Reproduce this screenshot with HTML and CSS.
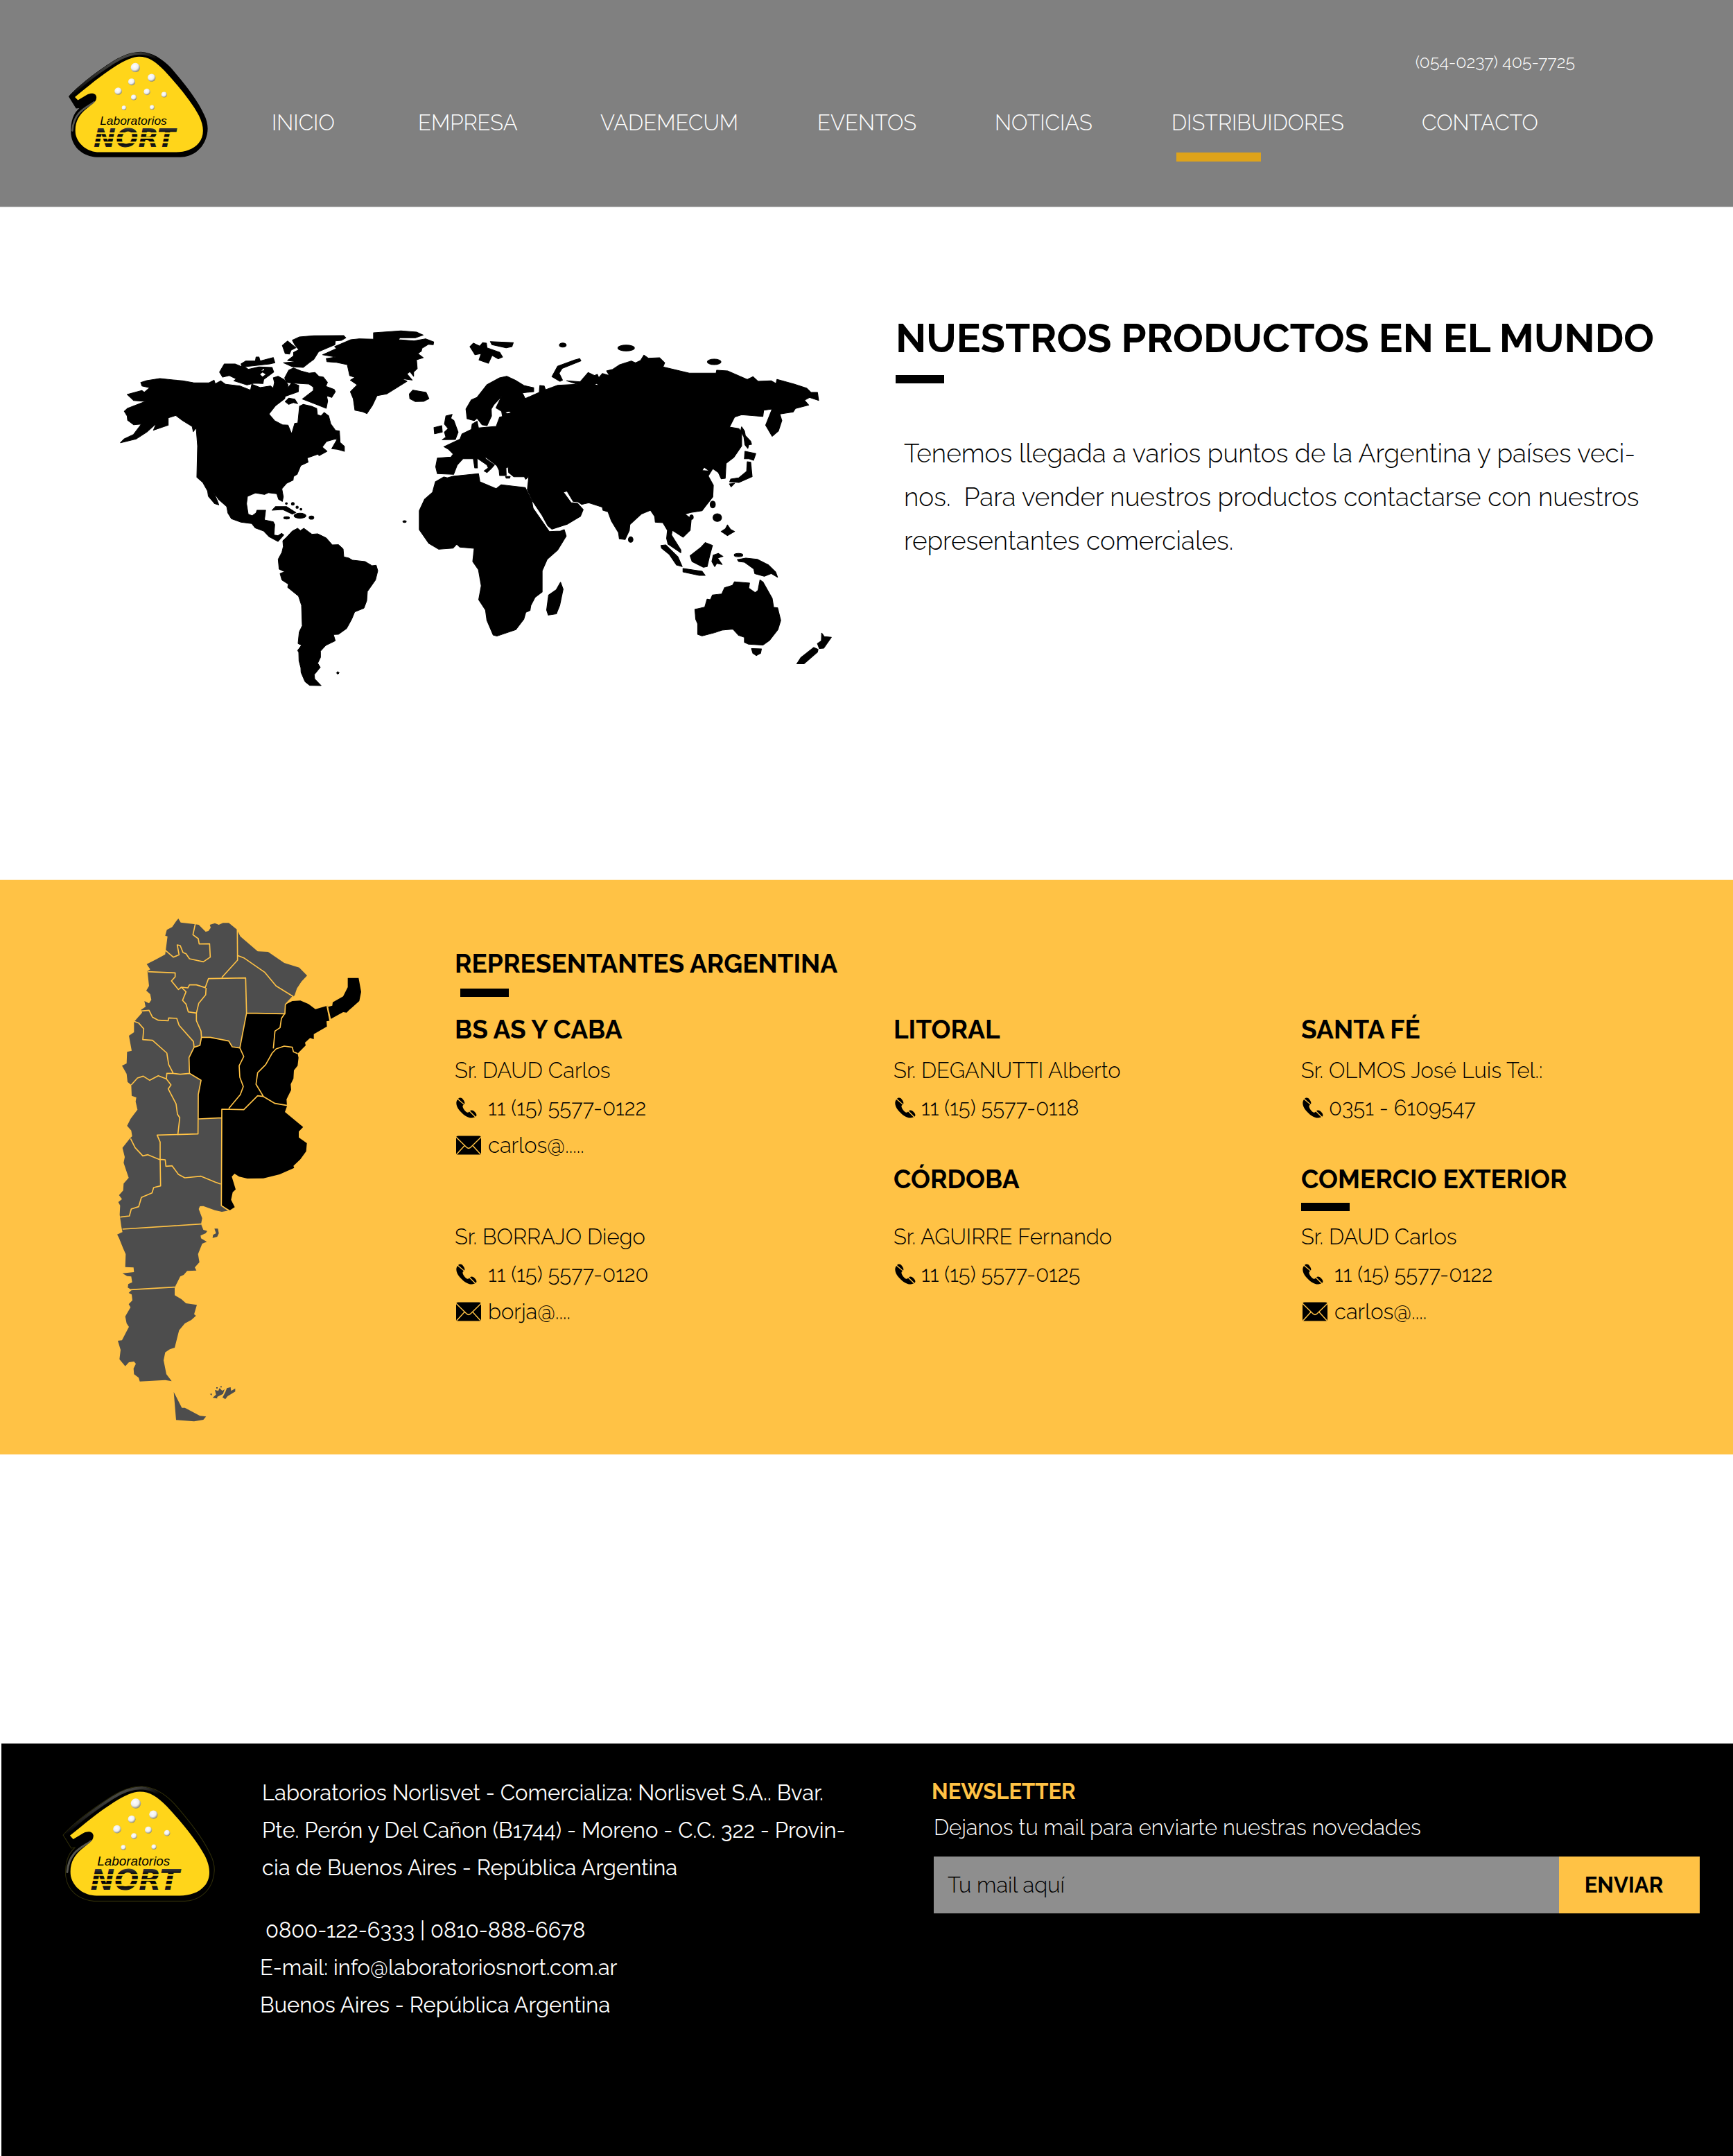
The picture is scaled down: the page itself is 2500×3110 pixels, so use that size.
FILE: index.html
```html
<!DOCTYPE html>
<html lang="es">
<head>
<meta charset="utf-8">
<title>Laboratorios Nort - Distribuidores</title>
<meta name="viewport" content="width=device-width, initial-scale=1">
<link rel="stylesheet" href="styles.css">
</head>
<body>
<svg class="sprite" aria-hidden="true">
  <defs>
    <linearGradient id="bevel" x1="0" y1="0" x2="1" y2="1">
      <stop offset="0" stop-color="#77776c"/><stop offset=".3" stop-color="#4a4a46"/><stop offset=".5" stop-color="#000"/>
    </linearGradient>
    <linearGradient id="chrome" x1="0" y1="0" x2="0" y2="1">
      <stop offset="0" stop-color="#777"/><stop offset=".3" stop-color="#111"/><stop offset=".65" stop-color="#000"/><stop offset="1" stop-color="#555"/>
    </linearGradient>
    <radialGradient id="ball" cx=".4" cy=".35" r=".65">
      <stop offset="0" stop-color="#fff"/><stop offset=".6" stop-color="#eee"/><stop offset="1" stop-color="#8d8a70"/>
    </radialGradient>
  </defs>
  <symbol id="drop" viewBox="55 40 610 465">
    <path stroke="inherit" d="M58 238C100 190 180 130 250 85C300 54 340 45 370 45C420 48 462 75 500 115C560 185 612 250 642 315C662 355 662 390 648 425C630 470 590 498 540 500H180C120 495 75 460 68 400C66 350 75 315 104 288L90 290Z"/>
    <path fill="none" stroke="url(#bevel)" stroke-width="11" stroke-linecap="round" stroke-linejoin="round" d="M66 238C104 196 184 136 253 91C302 60 340 52 370 52C416 55 455 80 494 121"/>
    <path fill="none" stroke="#55554f" stroke-width="8" stroke-linecap="round" d="M168 262C140 284 80 300 74 385"/>
    <path fill="#ffd51a" stroke="none" d="M85 240C140 195 200 145 260 107C300 82 335 66 362 66C402 66 432 86 470 125C530 190 587 260 620 320C645 370 642 410 620 438C595 468 560 478 520 478H190C140 478 98 445 88 400C82 350 102 320 130 295L155 275C168 266 178 256 178 240C175 222 155 222 138 230L98 254Z"/>
    <g fill="url(#ball)" stroke="none">
      <circle cx="346" cy="113" r="20"/><circle cx="416" cy="157" r="17"/><circle cx="330" cy="175" r="15"/><circle cx="272" cy="215" r="16"/><circle cx="396" cy="218" r="14"/><circle cx="339" cy="242" r="12"/><circle cx="470" cy="230" r="12"/><circle cx="297" cy="287" r="10"/><circle cx="418" cy="285" r="10"/>
    </g>
  </symbol>
  <symbol id="phone" viewBox="0 0 30 30">
    <path d="M2 3C-1 7 0 13 5 19C10 25 17 30 23 29.600L27 28.500L19 20.500C17.500 22.500 15.500 22 13.500 20C11 17.500 10 15.500 9.500 13.500C9.300 12 10 11 11 10.500Z"/>
    <path d="M3 2C5 0 8 0 10 3C12 5.500 13 8 12 9.800Z"/>
    <path d="M20 19.500C22 17.500 25 18.500 27 21C29.500 23.500 30.300 26 28.300 27.800Z"/>
  </symbol>
  <symbol id="mail" viewBox="0 0 37 28">
    <rect width="37" height="28" rx="3"/>
    <path fill="none" stroke="#ffc245" stroke-width="1.500" d="M0 2L16 17.500Q18.500 19.500 21 17.500L37 2M1 27L12.500 14.500M36 27L24.500 14.500"/>
  </symbol>
</svg>

<header class="header">
  <a class="header-logo" href="#" aria-label="Laboratorios Nort">
    <svg class="logo" viewBox="55 40 610 465">
      <use href="#drop" x="55" y="40" width="610" height="465"/>
      <text class="logo-small" x="193" y="360">Laboratorios</text>
      <text class="logo-big" x="166" y="456" fill="url(#chrome)">NORT</text>
      <path stroke="#ffd51a" stroke-width="7" d="M160 396H550M160 416H545M160 436H540"/>
    </svg>
  </a>
  <div class="header-main">
    <a class="header-phone" href="tel:+5402374057725">(054-0237) 405-7725</a>
    <nav class="nav">
      <a href="#">INICIO</a>
      <a href="#">EMPRESA</a>
      <a href="#">VADEMECUM</a>
      <a href="#">EVENTOS</a>
      <a href="#">NOTICIAS</a>
      <a class="active" href="#" aria-current="page">DISTRIBUIDORES</a>
      <a href="#">CONTACTO</a>
    </nav>
  </div>
</header>

<main>
  <section class="intro">
    <div class="intro-map">
      <svg class="world" viewBox="172 474 1032 520" role="img" aria-label="Mapa del mundo">
        <g transform="translate(160 460) scale(.3444 .3333)">
          <path d="M125 275L150 267L205 258L260 264L300 268L345 276L410 277L432 265L437 281L460 268L480 283L540 290L585 308L590 283L625 297L668 290L680 300L685 275L680 255L700 248L725 262L742 285L740 300L757 277L787 288L785 315L730 335L728 345L690 375L662 412L685 440L718 458L742 460L757 498L770 452L783 450L790 378L805 370L840 378L862 388L865 415L880 420L893 405L912 420L921 455L940 482L957 485L960 535L978 552V573L950 565L925 562L950 517L903 530L885 555L905 573L872 592L868 585L822 602L826 620L795 635L780 672L765 682L763 698L735 712L716 735L722 770L718 790L702 780L695 757L660 752L643 760L605 753L572 768L568 800L575 845L592 852L608 840L612 828H648L643 870L680 878L686 890L683 935L700 938L715 928L724 935L700 963L662 942L640 918L605 905L590 886L545 880L505 865L490 840L485 812L452 782L430 750L445 785L452 805L435 800L408 767L405 745L385 708L360 685L363 550L357 470L345 488L340 465L300 440L272 418L240 428V460L178 482L190 453L150 490L105 520L40 536L55 520L95 500L128 455L95 458L70 438L68 420L56 400L70 387L145 357L95 353L68 327L130 310L140 318L162 298L130 290Z"/>
          <path d="M730 358L745 343L770 347L782 367L765 362L745 370ZM735 275L728 255L745 222L765 212L795 225L830 235L855 232L870 248L890 252L907 275L900 292L935 305L940 315L925 340L903 332L908 355L902 387L860 370L802 347L848 310V295L830 282L770 278Z"/>
          <path d="M455 230L475 195H520L550 208L545 195L565 182H605L608 165H620L625 182L680 167L687 190L665 195L560 207L575 218L620 208L675 210L682 230L640 262L637 280L600 278L570 286L515 268L525 260L495 245L468 252Z"/>
          <path d="M760 92L790 78L850 73L975 72L984 82L965 93L940 95L938 112L870 142L850 175L830 190L805 210L760 207L723 190L780 185L740 180L765 160V145L787 133L770 112ZM718 115L740 96L775 125L755 135L748 152L730 150Z"/>
          <path d="M887 155L905 147L945 128L937 120L1005 90L1040 86L1100 88V60L1215 52L1280 57L1308 70L1275 82L1210 82L1205 90L1270 95L1318 86L1352 100L1350 112L1330 110L1303 127L1300 140L1285 150L1308 168L1280 177L1283 215L1268 230V248L1252 228L1240 238L1262 265L1215 258L1240 270L1155 325L1115 332L1095 375L1072 410L1055 402L1022 395L1015 345L1003 315L1032 285L1003 265L1022 253L1000 245L990 198L945 188L905 185L902 172L942 165Z"/>
          <path d="M1250 325L1265 308L1320 318L1332 345L1310 357L1275 358L1252 345ZM675 828L690 812H735L775 838L760 845L720 825Z"/>
          <ellipse cx="792" cy="852" rx="25" ry="11"/><ellipse cx="736" cy="861" rx="12" ry="5"/><ellipse cx="840" cy="860" rx="10" ry="7"/><circle cx="762" cy="800" r="6"/><circle cx="780" cy="815" r="5"/><circle cx="735" cy="799" r="4"/><circle cx="796" cy="824" r="4"/><ellipse cx="1230" cy="877" rx="7" ry="4"/>
          <path class="cut" d="M625 240L635 232L648 240L635 250ZM630 224L640 216L642 222Z"/>
        </g>
        <path transform="translate(380 740) scale(.3333)" d="M84 120L100 105L125 78L148 66L160 76L175 66L210 92L235 90L272 108L298 138L325 137L345 155L348 190L370 195L385 204L440 210L470 228L488 226L495 250L485 290L450 340L447 380L435 412L395 428L382 460L360 500L325 525L303 526L311 553L270 573L247 598V625L235 650L246 668L220 700L222 718L250 747L200 746L180 730L163 690L162 670L154 640L153 603L148 595L165 572L150 565L155 515L168 488L165 400L152 360L105 322L108 308L80 290L72 262L92 254L68 243L64 200L80 170L86 145ZM316 692L322 686L328 692L322 698Z"/>
        <g transform="translate(580 460) scale(.4082 .3333)">
          <path d="M125 602L173 598L181 585L165 565L148 553L205 520L212 498L245 478L248 455L265 443L270 472L333 465L345 425L355 422L352 400L332 385L352 335L325 370L315 390L316 420L300 462L283 458L265 430L255 440L230 432L226 390L245 350L265 340L300 285L345 255L370 248L400 265L430 288L465 298V315L425 320L435 345L485 318L487 288L502 290L507 307L550 287L620 283L582 268L630 272L658 232L680 245L690 240L695 255L708 236L733 245L723 225L745 218L770 198L810 182L825 190L843 180L855 157L870 170L910 168L928 190L922 208L1015 235H1110L1112 222L1150 225L1220 262L1240 250L1258 270L1305 268L1322 280L1325 262L1385 282L1430 300L1445 318H1468L1472 353L1440 340L1422 352L1437 373L1390 388L1382 403L1335 412L1342 440L1330 485L1308 508L1285 460L1308 390L1278 395L1275 422L1200 415L1175 425L1157 468L1190 475L1200 490V550L1172 600L1145 625L1142 690L1128 692L1118 665L1098 648L1082 680L1100 720L1098 770L1060 830L1020 838L1000 845L1022 865L1018 915L993 945L955 915L952 935L985 1000V1012L940 975L935 950L938 915L922 882L895 880L893 855L878 828L845 845L805 890L803 915L788 955L768 952L765 925L740 875L728 835L710 828L708 815L660 796L635 803L622 792L605 790L583 745L570 750L597 795L620 798L640 825L630 855L585 888L530 910L515 895L495 850L462 790L443 740L448 683L395 683L377 665L375 640L367 645L368 678L345 678L343 655L335 635L292 595L295 605L326 632L315 648L300 665L290 658L305 645L300 632L268 605H215L195 632L182 673L125 670L119 640Z"/>
          <path d="M252 605H265L266 645H257ZM366 682H382L380 689H368ZM432 682L446 684L437 694Z"/>
          <path d="M160 688L180 681L270 670L275 705L333 735L350 718L435 730L458 785L463 820L520 920L560 918L573 912L580 940L550 1000L513 1040L495 1090V1182L470 1205L455 1240L452 1262L437 1270L430 1300L402 1345L335 1373L322 1368L300 1305L295 1260L271 1215L280 1155L270 1085L250 1050L255 993L205 988L193 975L180 992L130 997L95 972L61 912V830L80 780L108 750L118 705L148 684ZM560 1140L569 1170L557 1240L545 1277L517 1282L511 1260L518 1195L545 1172Z"/>
          <path d="M155 420L177 413L172 430L183 440L198 490L188 522L142 523L155 512L150 490L163 475L150 455ZM113 470L140 462L142 490L115 497ZM240 120L252 105L275 118L285 103L298 105L300 125L345 145L355 165L340 173L318 158L305 192L272 178L280 150L258 155ZM312 98L393 103L388 120L368 125L318 112ZM530 250L550 205L610 178L628 172L632 182L565 215L555 235L567 265L558 270Z"/>
          <path d="M1200 467L1210 485L1213 505L1232 530L1235 543L1225 545L1222 560L1212 545L1208 510L1197 485ZM1212 573L1250 583L1242 612L1225 605H1210ZM1220 618L1232 620L1237 683L1190 708L1158 705L1162 693L1190 688L1218 660ZM1157 714L1175 712L1163 727ZM1150 892L1160 910L1175 920L1150 938L1128 920L1143 908Z"/>
          <ellipse cx="568" cy="113" rx="12" ry="9"/><ellipse cx="792" cy="126" rx="29" ry="13"/><ellipse cx="1103" cy="186" rx="24" ry="12"/><ellipse cx="1098" cy="803" rx="9" ry="15"/><ellipse cx="1114" cy="860" rx="15" ry="17"/><ellipse cx="1023" cy="858" rx="6" ry="10"/><ellipse cx="808" cy="955" rx="8" ry="12"/><ellipse cx="1189" cy="1022" rx="15" ry="7"/>
          <path d="M915 980L932 978L975 1030L990 1072L970 1065L945 1020L917 992ZM993 1080L1060 1092L1071 1110H1050L993 1095ZM1018 1025L1055 990L1072 968L1097 980L1087 1025L1078 1072L1065 1075L1025 1050ZM1095 1050L1100 1022L1118 1015L1134 1028L1115 1035L1131 1063L1112 1058L1105 1072ZM1185 1042L1215 1035L1255 1040L1295 1065L1320 1095L1327 1118L1305 1102L1280 1114L1247 1103L1243 1082L1210 1053L1190 1050Z"/>
          <path d="M1035 1257L1070 1247L1078 1213L1090 1215L1097 1195L1130 1190L1140 1163L1168 1153L1175 1138L1228 1143L1225 1165L1248 1185L1258 1175L1265 1130L1275 1138L1308 1210L1313 1248L1327 1250L1338 1305L1328 1345L1298 1392L1275 1412L1225 1408L1210 1400V1378L1190 1370L1170 1343L1130 1347L1105 1358L1060 1372L1045 1365V1320L1038 1300ZM1235 1427L1270 1428L1267 1447L1252 1457L1240 1447ZM1483 1360L1492 1375L1517 1378L1490 1425L1475 1427L1468 1405L1482 1393ZM1455 1422L1470 1430L1468 1442L1420 1493H1395L1410 1465Z"/>
          <path class="cut" d="M366 405L378 401L384 405L372 409ZM1062 655L1068 644L1082 656ZM682 284L688 281L692 286Z"/>
        </g>
      </svg>
    </div>
    <div class="intro-text">
      <h1>NUESTROS PRODUCTOS EN EL MUNDO</h1>
      <p>Tenemos llegada a varios puntos de la Argentina y países veci-<br>nos.&nbsp; Para vender nuestros productos contactarse con nuestros<br>representantes comerciales.</p>
    </div>
  </section>

  <section class="reps">
    <div class="reps-map">
      <svg class="argentina" viewBox="54 45 1062 2182" role="img" aria-label="Mapa de Argentina">
        <g fill="#4d4d4d">
          <path d="M312 60L322 48L332 65L390 72L410 75L440 105L452 102L462 88L458 75L480 68L497 75L515 67H540L575 95L590 125L665 190L710 192L780 240L845 260L879 295L855 320L835 350L825 380L785 420V460L600 620L510 1290L540 1312L510 1317L480 1310L430 1292L415 1293L410 1305L425 1345L420 1370L430 1395L447 1400L440 1410L418 1420L420 1432L445 1447L425 1455L407 1500L413 1535L393 1558L400 1571L360 1573L345 1590L330 1597L306 1645V1678L335 1695L355 1713L402 1720L390 1760L398 1767L378 1785L350 1800L325 1830L306 1905L285 1912L265 1925L258 1960L270 2020L293 2050L265 2045L155 2051L150 2035L130 2020L128 1995L138 1975L130 1965L108 1968L92 1985L67 1955L72 1915L60 1875L78 1873L95 1840L108 1815L98 1800L92 1770L115 1730L107 1717L123 1700L120 1675L107 1668L120 1655L103 1645L105 1630L122 1622L118 1597L100 1595L80 1583L130 1578L128 1558L92 1556L94 1500L83 1475L65 1430L57 1415L80 1405L75 1380L68 1330L70 1290L62 1275L78 1262L65 1245L83 1225L85 1195L107 1170L95 1135L85 1105L90 1080L80 1040L112 1000L122 990L118 965L100 945L115 915L130 895L145 875L137 840L140 822L120 815L118 768L102 755L98 720L78 685L98 675L100 625L120 620L108 555L130 540V495L165 455L160 443L180 430L175 405L195 415L205 400L200 375L183 360L195 340L188 275L200 268L185 245L225 225L265 203L275 125L265 122L272 97L295 85Z"/>
          <path d="M478 1390H493L497 1410L490 1425L470 1430L472 1417L485 1410ZM302 2097L337 2165H350L415 2200L442 2203L430 2217L390 2224L312 2218Z"/>
          <path d="M480 2088L495 2092L500 2080L512 2092L522 2085L515 2105L490 2118V2125L470 2122L485 2108ZM532 2080L548 2076L550 2092L568 2082L568 2095L535 2115L525 2128L513 2120L525 2098ZM458 2105L468 2104L466 2112ZM486 2076H492V2082H486ZM503 2072H510V2077H503Z"/>
        </g>
        <path d="M1055 305H1102L1113 365L1105 405L1060 445L1050 455L1035 453L982 482L970 430L988 425L990 410L1035 385L1055 345ZM785 420L815 405L850 403L885 418L915 440L967 425L978 490L963 493L965 515L908 548V570L892 565L870 585L873 597L838 632L842 650L838 685L822 705L820 740L808 765L810 790L790 830L792 860L783 885L862 950L843 970V995L878 1020L875 1055L850 1090L820 1118L823 1127L760 1155L690 1172L620 1173L585 1165L565 1152L553 1165L570 1220L557 1232L550 1265L566 1297L545 1310L510 1290V910L410 915V810L420 748L368 715V650L390 605L418 595L422 562H460L540 578L550 600L588 608L617 457L785 460Z"/>
        <path class="borders" d="M395 72L385 118L408 135L412 158L457 157L460 215L430 235L370 222L355 200L342 195L330 165L317 162L325 205L300 215L265 185M577 95L578 228L510 303M190 278L308 283V300L292 318L322 355L335 345L363 348L370 335H400L438 347L452 308L613 305L617 457L785 460M578 208L605 218L695 280L745 340L818 385L785 420L783 458L768 480L762 520L740 535L733 610M335 345L355 365L340 402L355 418L365 452L400 457L410 415L440 378L442 348M400 457V490L420 535L422 562L460 562L540 578L555 603L588 608L617 457M422 562L415 597L390 605L387 580L325 510L315 480L280 478L278 490L235 488L210 475L195 445L160 448M130 493L150 500L172 525L168 572L210 575L272 630L280 680L300 718L330 722L370 718L368 650L390 605M118 768L145 738L170 730L198 748L235 728L270 742L272 718H300M270 742L290 768L278 785L312 850L318 895L328 910L320 980M370 718L420 748L408 810L407 980L230 985L243 1015V1090L265 1092L268 1120L295 1118L322 1155L350 1170L420 1163L480 1188L505 1197M410 915L510 910M115 1000L135 1040L168 1075L190 1070L243 1092L245 1205L215 1212L208 1235L162 1255L150 1295L118 1305L110 1335L70 1340M80 1392L420 1370M115 1654L306 1643M540 1312L508 1290L510 873L605 875L665 815L690 818M588 608L605 645L585 685L588 735L603 775L590 810L540 870M838 632L820 625L815 605L780 600L745 612L728 630L700 680L665 715L658 765L690 818L740 848L793 857M965 425L978 490"/>
      </svg>
    </div>
    <div class="reps-content">
      <h2 class="ruled">REPRESENTANTES ARGENTINA</h2>
      <div class="reps-grid">
        <div class="reps-col">
          <article class="rep">
            <h3>BS AS Y CABA</h3>
            <p>Sr. DAUD Carlos</p>
            <p class="contact"><svg class="phone"><use href="#phone"/></svg>11 (15) 5577-0122</p>
            <p class="contact"><svg class="mail"><use href="#mail"/></svg>carlos@.....</p>
          </article>
          <article class="rep rep-spaced">
            <p>Sr. BORRAJO Diego</p>
            <p class="contact"><svg class="phone"><use href="#phone"/></svg>11 (15) 5577-0120</p>
            <p class="contact"><svg class="mail"><use href="#mail"/></svg>borja@....</p>
          </article>
        </div>
        <div class="reps-col tight">
          <article class="rep">
            <h3>LITORAL</h3>
            <p>Sr. DEGANUTTI Alberto</p>
            <p class="contact"><svg class="phone"><use href="#phone"/></svg>11 (15) 5577-0118</p>
          </article>
          <article class="rep rep-lower">
            <h3>CÓRDOBA</h3>
            <p>Sr. AGUIRRE Fernando</p>
            <p class="contact"><svg class="phone"><use href="#phone"/></svg>11 (15) 5577-0125</p>
          </article>
        </div>
        <div class="reps-col">
          <article class="rep tight">
            <h3>SANTA FÉ</h3>
            <p>Sr. OLMOS José Luis Tel.:</p>
            <p class="contact"><svg class="phone"><use href="#phone"/></svg>0351 - 6109547</p>
          </article>
          <article class="rep rep-lower">
            <h3 class="ruled">COMERCIO EXTERIOR</h3>
            <p>Sr. DAUD Carlos</p>
            <p class="contact"><svg class="phone"><use href="#phone"/></svg>11 (15) 5577-0122</p>
            <p class="contact"><svg class="mail"><use href="#mail"/></svg>carlos@....</p>
          </article>
        </div>
      </div>
    </div>
  </section>
</main>

<footer class="footer">
  <a class="footer-logo" href="#" aria-label="Laboratorios Nort">
    <svg class="logo" viewBox="55 40 610 465">
      <use href="#drop" x="55" y="40" width="610" height="465"/>
      <text class="logo-small" x="193" y="360">Laboratorios</text>
      <text class="logo-big" x="166" y="456" fill="url(#chrome)">NORT</text>
      <path stroke="#ffd51a" stroke-width="7" d="M160 396H550M160 416H545M160 436H540"/>
    </svg>
  </a>
  <address class="footer-info">
    <p>Laboratorios Norlisvet - Comercializa: Norlisvet S.A.. Bvar.<br>Pte. Perón y Del Cañon (B1744) - Moreno - C.C. 322 - Provin-<br>cia de Buenos Aires - República Argentina</p>
    <p>&nbsp;0800-122-6333 | 0810-888-6678<br>E-mail: <a href="mailto:info@laboratoriosnort.com.ar">info@laboratoriosnort.com.ar</a><br>Buenos Aires - República Argentina</p>
  </address>
  <form class="newsletter">
    <h2>NEWSLETTER</h2>
    <label for="email">Dejanos tu mail para enviarte nuestras novedades</label>
    <div class="newsletter-row">
      <input id="email" type="email" placeholder="Tu mail aquí">
      <button type="submit">ENVIAR</button>
    </div>
  </form>
</footer>
</body>
</html>
```
FILE: styles.css
```css
* {
  box-sizing: border-box;
}

body,
h1,
h2,
h3,
p {
  margin: 0;
}

body {
  background: #fff;
  color: #000;
  font-family: Raleway, Lato, "Open Sans", sans-serif;
  font-size: 31px;
  font-weight: 300;
  font-variant-numeric: oldstyle-nums;
}

a {
  color: inherit;
  text-decoration: none;
}

.sprite {
  position: absolute;
  width: 0;
  height: 0;
}

.logo {
  display: block;
  width: 100%;
  aspect-ratio: 610 / 465;
  overflow: visible;
}

.logo-small {
  font: italic 52px "Liberation Sans", sans-serif;
}

.logo-big {
  font: italic bold 114px "DejaVu Sans", sans-serif;
}

/* Header */

.header {
  display: grid;
  grid-template-columns: 392fr 2108fr;
  padding: 73px 0 65px;
  background: #808080;
  border-bottom: 1px solid #c4c4c4;
  color: #fff;
}

.header-logo {
  width: 204px;
  margin-left: 98px;
}

.header-main {
  display: flex;
  flex-direction: column;
}

.header-phone {
  align-self: flex-end;
  margin-right: 228px;
  font-size: 25px;
  line-height: 32px;
}

.nav {
  display: grid;
  grid-template-columns: 211fr 263fr 313fr 256fr 255fr 361fr 449fr;
  margin-top: 52px;
  line-height: 40px;
}

.nav .active::after {
  content: "";
  display: block;
  width: 122px;
  height: 13px;
  margin: 23px 0 0 7px;
  background: #dea31a;
}

/* Intro */

.intro {
  display: grid;
  grid-template-columns: 1292fr 1208fr;
  padding: 153px 0 275px;
}

.intro-map {
  padding: 22px 88px 0 172px;
}

.world {
  display: block;
  width: 100%;
  stroke: #000;
  stroke-width: 3px;
  stroke-linejoin: round;
}

.world .cut {
  fill: #fff;
  stroke: none;
}

h1 {
  font-size: 58px;
  line-height: 72px;
  white-space: nowrap;
}

h1::after,
.ruled::after {
  content: "";
  display: block;
  width: 70px;
  height: 12px;
  background: #000;
}

h1::after {
  margin-top: 17px;
}

.intro-text p {
  margin: 70px 0 0 12px;
  font-size: 37px;
  line-height: 63px;
  white-space: nowrap;
}

/* Representatives */

.reps {
  display: grid;
  grid-template-columns: 656fr 1844fr;
  padding: 55px 0 47px;
  background: #ffc245;
  white-space: nowrap;
}

.reps-map {
  padding: 0 134px 0 168px;
}

.argentina {
  display: block;
  width: 100%;
}

.borders {
  fill: none;
  stroke: #ffc245;
  stroke-width: 5px;
  stroke-linejoin: round;
}

.reps-content {
  padding-top: 42px;
}

.reps h2,
.reps h3 {
  font-size: 37px;
  line-height: 48px;
}

.reps h2::after {
  margin: 12px 0 0 8px;
}

.reps-grid {
  display: grid;
  grid-template-columns: 633fr 588fr 623fr;
  margin-top: 23px;
}

.rep h3 {
  margin-bottom: 8px;
}

.rep p {
  line-height: 54px;
}

.rep-spaced {
  margin-top: 78px;
}

.rep-lower {
  margin-top: 52px;
}

.rep-lower h3 {
  min-height: 72px;
}

.rep-lower .ruled::after {
  margin-top: 10px;
}

.contact {
  display: flex;
  align-items: center;
  gap: 10px;
}

.contact svg {
  box-sizing: content-box;
  margin-left: 2px;
}

.phone {
  width: 30px;
  height: 30px;
  padding-right: 6px;
}

.mail {
  width: 36px;
  height: 28px;
}

.tight .contact {
  gap: 2px;
}

/* Footer */

.footer {
  display: grid;
  grid-template-columns: 373fr 969fr 1108fr;
  margin: 417px 0 0 2px;
  padding: 44px 48px 192px 0;
  background: #000;
  color: #fff;
}

.footer-logo {
  width: 222px;
  margin: 16px 0 0 88px;
  stroke: #2e2c08;
  stroke-width: 3px;
}

.footer-logo text {
  stroke: none;
}

.footer-info {
  font-style: normal;
  font-weight: 400;
  line-height: 54px;
  white-space: nowrap;
}

.footer-info p:first-child {
  margin-left: 3px;
}

.footer-info p + p {
  margin-top: 36px;
}

.newsletter h2 {
  margin-top: 5px;
  color: #ffc245;
  font-size: 31px;
  line-height: 40px;
}

.newsletter label {
  display: block;
  margin: 12px 0 22px 3px;
  line-height: 40px;
}

.newsletter-row {
  display: flex;
  margin-left: 3px;
}

.newsletter input {
  flex: 1;
  min-width: 0;
  height: 82px;
  padding: 0 20px;
  border: 0;
  border-radius: 0;
  background: #8e8e8e;
  color: #000;
  font: inherit;
}

.newsletter input::placeholder {
  color: #000;
  opacity: 1;
}

.newsletter button {
  width: 203px;
  padding: 0 16px 0 0;
  border: 0;
  background: #ffc245;
  color: #000;
  font: inherit;
  font-weight: 700;
}
```
